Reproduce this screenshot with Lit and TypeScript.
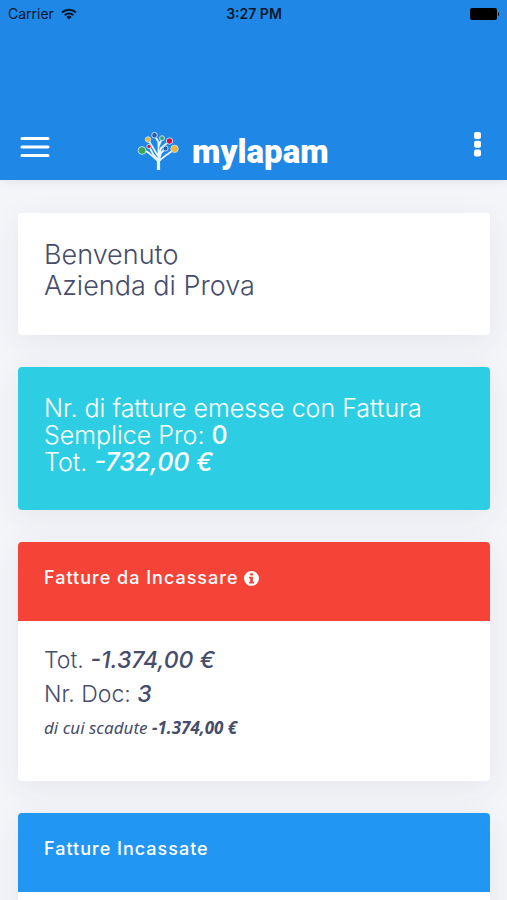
import { LitElement, html, css, svg, nothing } from "lit";
import { customElement, property } from "lit/decorators.js";

@customElement("status-bar")
class StatusBar extends LitElement {
  static styles = css`
    :host {
      display: grid;
      grid-template-columns: 1fr auto 1fr;
      align-items: center;
      height: 28px;
      padding: 0 7px 0 8px;
      font: 14px/28px Inter, "Liberation Sans", sans-serif;
      color: #06182c;
    }
    .carrier {
      display: flex;
      align-items: center;
      gap: 7px;
    }
    .time {
      font-weight: 600;
    }
    .battery {
      justify-self: end;
      display: block;
    }
  `;

  render() {
    return html`
      <span class="carrier">
        Carrier
        <svg width="16" height="12" viewBox="0 0 16 12" fill="none" stroke="currentColor" stroke-width="2" aria-hidden="true">
          <path d="M1 4.6a10.2 10.2 0 0 1 14 0M3.6 7.2a6.5 6.5 0 0 1 8.8 0" />
          <path d="M8 11.6 5.4 9a3.8 3.8 0 0 1 5.2 0z" fill="currentColor" stroke="none" />
        </svg>
      </span>
      <span class="time">3:27 PM</span>
      <svg class="battery" width="30" height="12" viewBox="0 0 30 12" fill="#000" aria-hidden="true">
        <rect x="0" y="0" width="27" height="12" rx="2" />
        <path d="M28 4a2.4 2.4 0 0 1 0 4z" />
      </svg>
    `;
  }
}

const LEAVES: Array<[number, number, number, string]> = [
  [5, 21.5, 3.9, "#35a853"],
  [12, 17.5, 2.2, "#c8234f"],
  [11, 10.5, 2.7, "#f2b632"],
  [17.5, 6.2, 2.8, "#2d5aa8"],
  [25, 9.2, 2.5, "#35a877"],
  [32.5, 12, 3.2, "#d8123f"],
  [28.5, 19.5, 2.5, "#2d5aa8"],
  [37.5, 19.8, 3.7, "#f2b632"],
];

@customElement("brand-logo")
class BrandLogo extends LitElement {
  static styles = css`
    :host {
      display: flex;
      align-items: flex-end;
      gap: 13px;
      color: #fff;
    }
    .name {
      font: 900 33px/38px Roboto, "Liberation Sans", sans-serif;
    }
  `;

  render() {
    return html`
      <svg width="42" height="42" viewBox="0 0 42 42" aria-hidden="true">
        <g fill="none" stroke="#e8f6ff">
          <path stroke-width="3.2" d="M21.5 41V29" />
          <path
            stroke-width="1.8"
            d="M21 32L14 26Q11 22 5 21.500M20.500 30L16 25L12 17.500M21 27L11 10.500M21.500 30V13L17.500 6.200M21.500 18L25 9.200M22 27L24 19L32.500 12M22 31L24 24L28.500 19.500M22 32Q29 26 31 25L37.500 20"
          />
        </g>
        ${LEAVES.map(
          ([x, y, r, fill]) => svg`<circle cx=${x} cy=${y} r=${r} fill=${fill} stroke="#b9dcf8" stroke-width="1" />`,
        )}
      </svg>
      <span class="name">mylapam</span>
    `;
  }
}

@customElement("info-card")
class InfoCard extends LitElement {
  @property() heading = "";
  @property({ type: Boolean }) info = false;
  @property({ reflect: true }) tone = "plain";

  static styles = css`
    :host {
      display: block;
      border-radius: 4px;
      background: #fff;
      color: #464d6b;
      overflow: hidden;
      box-shadow: 0 8px 32px rgba(50, 50, 70, 0.07);
    }
    :host([tone="cyan"]) {
      background: #2dcee3;
      color: #fff;
    }
    .head {
      display: flex;
      align-items: center;
      gap: 6px;
      padding: 24px 26px 31px;
      background: #2196f3;
      color: #fff;
    }
    :host([tone="red"]) .head {
      background: #f54337;
    }
    .title {
      margin: 0;
      font: 500 18px/24px Inter, "Open Sans", sans-serif;
      letter-spacing: 1px;
    }
    .hint {
      display: flex;
      padding: 0;
      border: 0;
      background: none;
      color: inherit;
    }
    .body {
      padding: 26px 26px 34px;
    }
    :host([tone="cyan"]) .body {
      padding: 28px 26px 34px;
    }
    :host([tone="red"]) .body,
    :host([tone="blue"]) .body {
      padding: 22px 26px 36px;
    }
  `;

  render() {
    return html`
      ${this.heading
        ? html`<header class="head">
            <h2 class="title">${this.heading}</h2>
            ${this.info
              ? html`<button class="hint" aria-label="Informazioni">
                  <svg width="15" height="15" viewBox="0 0 16 16" aria-hidden="true">
                    <path
                      fill="currentColor"
                      fill-rule="evenodd"
                      d="M8 0a8 8 0 1 1 0 16A8 8 0 0 1 8 0zM6.600 2.500v2.400h2.900V2.500zM5.400 6.200v1.700h1.200v3.700H5.400v1.700h5.300v-1.700H9.500V6.200z"
                    />
                  </svg>
                </button>`
              : nothing}
          </header>`
        : nothing}
      <div class="body"><slot></slot></div>
    `;
  }
}

@customElement("app-root")
class AppRoot extends LitElement {
  static styles = css`
    :host {
      display: flex;
      flex-direction: column;
      height: 100vh;
      background: #f4f5f9;
      font-family: Inter, "Open Sans", sans-serif;
    }
    .top {
      flex: none;
      background: #1f87e6;
      box-shadow: 0 1px 10px rgba(40, 60, 90, 0.1);
      z-index: 1;
    }
    .nav {
      display: flex;
      align-items: center;
      padding: 95px 20px 9px;
    }
    .brand {
      margin: 0 auto 0 87px;
      padding-top: 6px;
    }
    .icon {
      display: flex;
      padding: 0;
      border: 0;
      background: none;
      color: #fff;
    }
    .content {
      flex: 1;
      min-height: 0;
      overflow-y: auto;
      scrollbar-width: none;
      display: flex;
      flex-direction: column;
      gap: 32px;
      padding: 33px 17px 33px 18px;
    }
    .card {
      flex: none;
    }
    p,
    h1 {
      margin: 0;
      font-weight: 300;
    }
    .welcome {
      font-size: 27px;
      line-height: 31px;
    }
    .summary {
      font-size: 25px;
      line-height: 27px;
    }
    .figure {
      font-size: 23px;
      line-height: 34px;
    }
    .overdue {
      font: italic 400 17px/34px "Noto Sans", "Open Sans", sans-serif;
    }
    strong {
      font-weight: 500;
    }
    .overdue strong {
      font-weight: 700;
    }
  `;

  render() {
    return html`
      <header class="top">
        <status-bar></status-bar>
        <nav class="nav">
          <button class="icon" aria-label="Menu">
            <svg width="30" height="22" viewBox="0 0 30 22" stroke="currentColor" stroke-width="3" stroke-linecap="round" aria-hidden="true">
              <path d="M2 2.500h26M2 11h26M2 19.500h26" />
            </svg>
          </button>
          <brand-logo class="brand"></brand-logo>
          <button class="icon" aria-label="Altre opzioni">
            <svg width="18" height="34" viewBox="0 0 18 34" fill="currentColor" aria-hidden="true">
              <rect x="5" y="2" width="7" height="7" rx="2" />
              <rect x="5" y="10.700" width="7" height="7" rx="2" />
              <rect x="5" y="19.400" width="7" height="7" rx="2" />
            </svg>
          </button>
        </nav>
      </header>
      <main class="content">
        <info-card class="card">
          <h1 class="welcome">Benvenuto<br />Azienda di Prova</h1>
        </info-card>
        <info-card class="card" tone="cyan">
          <p class="summary">Nr. di fatture emesse con Fattura Semplice Pro: <strong>0</strong></p>
          <p class="summary">Tot. <strong><em>-732,00 €</em></strong></p>
        </info-card>
        <info-card class="card" tone="red" heading="Fatture da Incassare" info>
          <p class="figure">Tot. <strong><em>-1.374,00 €</em></strong></p>
          <p class="figure">Nr. Doc: <strong><em>3</em></strong></p>
          <p class="overdue">di cui scadute <strong>-1.374,00 €</strong></p>
        </info-card>
        <info-card class="card" tone="blue" heading="Fatture Incassate"></info-card>
      </main>
    `;
  }
}
